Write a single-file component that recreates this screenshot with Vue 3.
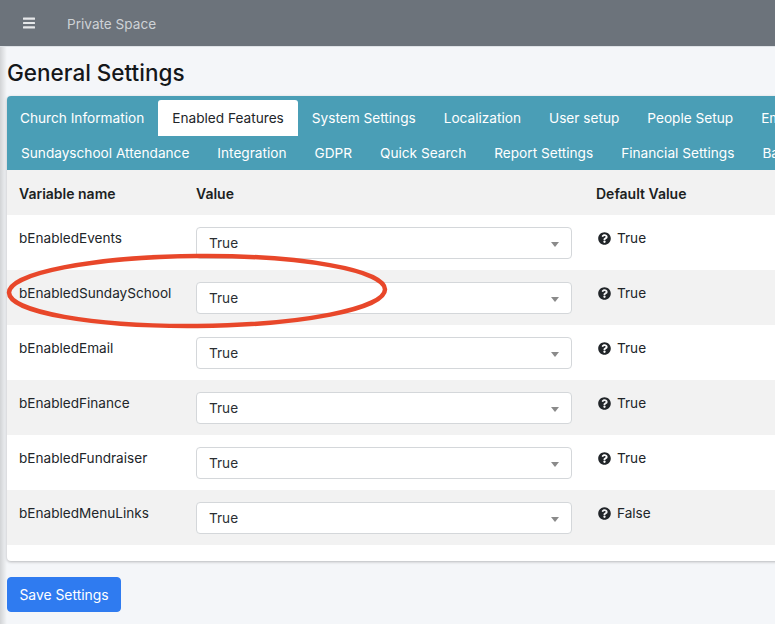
<script setup>
const tabsTop = [
  { label: 'Church Information' },
  { label: 'Enabled Features', active: true },
  { label: 'System Settings' },
  { label: 'Localization' },
  { label: 'User setup' },
  { label: 'People Setup' },
  { label: 'Email Setup' }
]
const tabsBottom = [
  'Sundayschool Attendance',
  'Integration',
  'GDPR',
  'Quick Search',
  'Report Settings',
  'Financial Settings',
  'Backup'
]
const rows = [
  { name: 'bEnabledEvents', def: 'True' },
  { name: 'bEnabledSundaySchool', def: 'True' },
  { name: 'bEnabledEmail', def: 'True' },
  { name: 'bEnabledFinance', def: 'True' },
  { name: 'bEnabledFundraiser', def: 'True' },
  { name: 'bEnabledMenuLinks', def: 'False' }
]
</script>

<template>
  <div class="page">
    <header class="navbar">
      <svg class="burger" width="12" height="12" viewBox="0 0 12 12">
        <rect x="0" y="0.5" width="12" height="2.2" rx="0.5" />
        <rect x="0" y="4.9" width="12" height="2.2" rx="0.5" />
        <rect x="0" y="9.3" width="12" height="2.2" rx="0.5" />
      </svg>
      <span class="brand">Private Space</span>
    </header>

    <main class="content">
      <h1 class="title">General Settings</h1>

      <section class="card">
        <div class="tabs">
          <div class="tab-row top">
            <a
              v-for="t in tabsTop"
              :key="t.label"
              class="tab"
              :class="{ active: t.active }"
            >{{ t.label }}</a>
          </div>
          <div class="tab-row bottom">
            <a v-for="t in tabsBottom" :key="t" class="tab">{{ t }}</a>
          </div>
        </div>

        <div class="table">
          <div class="row head">
            <div class="c-name">Variable name</div>
            <div class="c-value">Value</div>
            <div class="c-def">Default Value</div>
          </div>
          <div v-for="r in rows" :key="r.name" class="row">
            <div class="c-name">{{ r.name }}</div>
            <div class="c-value">
              <div class="select">
                <span>True</span>
                <i class="caret"></i>
              </div>
            </div>
            <div class="c-def">
              <svg class="help" width="13" height="13" viewBox="0 0 512 512">
                <path d="M504 256c0 136.997-111.043 248-248 248S8 392.997 8 256C8 119.083 119.043 8 256 8s248 111.083 248 248zM262.655 90c-54.497 0-89.255 22.957-116.549 63.758-3.536 5.286-2.353 12.415 2.715 16.258l34.699 26.31c5.205 3.947 12.621 3.008 16.665-2.122 17.864-22.658 30.113-35.797 57.303-35.797 20.429 0 45.698 13.148 45.698 32.958 0 14.976-12.363 22.667-32.534 33.976C247.128 238.528 216 254.941 216 296v4c0 6.627 5.373 12 12 12h56c6.627 0 12-5.373 12-12v-1.333c0-28.462 83.186-29.647 83.186-106.667 0-58.002-60.165-102-116.531-102zM256 338c-25.365 0-46 20.635-46 46 0 25.364 20.635 46 46 46s46-20.636 46-46c0-25.365-20.635-46-46-46z" fill="#212529" />
              </svg>
              <span>{{ r.def }}</span>
            </div>
          </div>
        </div>
      </section>

      <button class="save">Save Settings</button>
    </main>

    <svg class="mark" width="390" height="80" viewBox="0 0 390 80">
      <ellipse cx="195" cy="40" rx="188" ry="35" transform="rotate(-0.5 195 40)" fill="none" stroke="#e8472a" stroke-width="4.5" />
    </svg>
    <div class="edge"></div>
  </div>
</template>

<style scoped>
.page {
  position: relative;
  width: 775px;
  height: 624px;
  overflow: hidden;
  background: #f4f6f9;
  font-family: Inter, "Liberation Sans", sans-serif;
  font-size: 13.6px;
  color: #212529;
}
.navbar {
  height: 46px;
  background: #6c737b;
  border-bottom: 1px solid #dee2e6;
  display: flex;
  align-items: center;
  padding-left: 23px;
  box-sizing: content-box;
}
.burger { fill: #e6e8ea; }
.brand {
  margin-left: 32px;
  margin-top: 2px;
  color: #ced2d6;
  font-size: 13.6px;
}
.content {
  padding-left: 7px;
}
.title {
  margin: 0;
  padding-top: 11px;
  height: 38px;
  box-sizing: content-box;
  font-size: 22.5px;
  line-height: 29px;
  font-weight: 500;
  color: #14171a;
}
.card {
  width: 800px;
  background: #fff;
  border-radius: 4px;
  box-shadow: 0 1px 3px rgba(0, 0, 0, 0.25);
}
.tabs {
  height: 74px;
  background: #4a9eb6;
  border-radius: 4px 4px 0 0;
  padding-top: 4px;
  box-sizing: border-box;
  overflow: hidden;
}
.tab-row {
  display: flex;
  white-space: nowrap;
}
.tab-row.top { height: 36px; margin-left: -1px; }
.tab-row.bottom { height: 34px; }
.tab {
  color: #fff;
  padding: 0 14px;
  line-height: 36px;
  font-size: 13.65px;
}
.tab-row.bottom .tab {
  line-height: 35px;
  padding: 0 14px;
}
.tab.active {
  background: #fff;
  color: #212529;
  border-radius: 3px 3px 0 0;
}
.row {
  display: flex;
  height: 55px;
  padding-left: 12px;
}
.row:nth-child(even) { background: #fff; }
.row:nth-child(odd) { background: #f2f2f2; }
.row.head {
  height: 45px;
  font-weight: 600;
  font-size: 14px;
  align-items: center;
  padding-top: 1px;
  box-sizing: border-box;
  color: #1c1f22;
}
.table { padding-bottom: 16px; }
.c-name { width: 177px; }
.c-value { width: 400px; }
.row:not(.head) .c-name { padding-top: 15px; line-height: 17px; }
.row:not(.head) .c-def { padding-top: 15px; line-height: 17px; display: flex; align-items: center; height: 17px; }
.help { margin: -1px 6px 0 2px; flex: none; }
.select {
  margin-top: 12px;
  width: 376px;
  height: 32px;
  box-sizing: border-box;
  background: #fff;
  border: 1px solid #d4d7da;
  border-radius: 4px;
  padding-left: 12px;
  line-height: 31px;
  position: relative;
  color: #2b2f33;
}
.caret {
  position: absolute;
  right: 12px;
  top: 14px;
  border-left: 4px solid transparent;
  border-right: 4px solid transparent;
  border-top: 5px solid #8a8a8a;
}
.save {
  display: block;
  margin-top: 16px;
  width: 114px;
  height: 35px;
  background: #2f7bf0;
  color: #fff;
  border: 1px solid #2f7bf0;
  border-radius: 4px;
  font-family: inherit;
  font-size: 13.9px;
  padding: 0;
}
.mark {
  position: absolute;
  left: 2px;
  top: 251px;
}
.edge {
  position: absolute;
  left: 0;
  top: 47px;
  bottom: 0;
  width: 7px;
  background: linear-gradient(to right, rgba(0, 0, 0, 0.14), rgba(0, 0, 0, 0));
}
</style>
